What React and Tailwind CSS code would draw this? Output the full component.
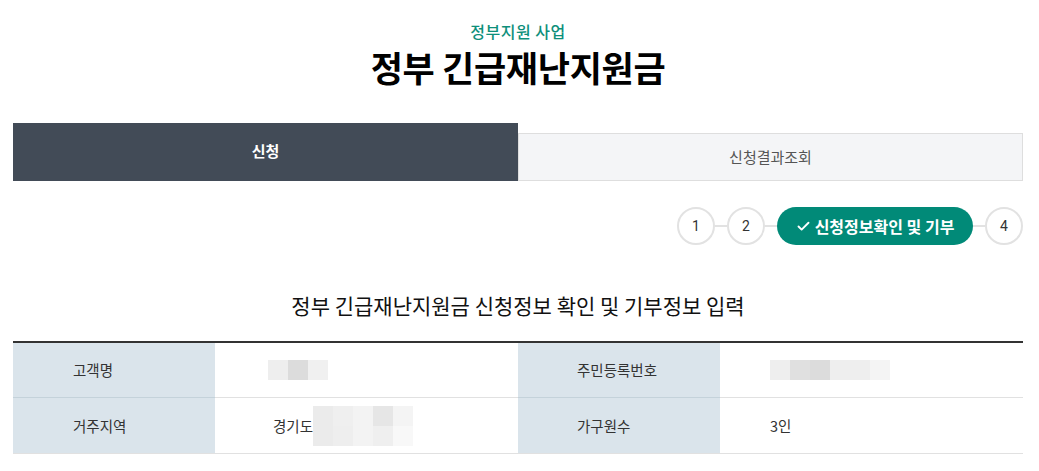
import { Check } from 'lucide-react';

const font = { fontFamily: '"Noto Sans CJK KR", "Noto Sans", sans-serif' };

function Mosaic({ rows }) {
  return (
    <div className="flex flex-col">
      {rows.map((row, i) => (
        <div key={i} className="flex">
          {row.map((c, j) => (
            <div key={j} className="w-[20px] h-[20px]" style={{ backgroundColor: c }} />
          ))}
        </div>
      ))}
    </div>
  );
}

function Circle({ n }) {
  return (
    <div
      className="w-[38px] h-[38px] rounded-full border-2 border-[#e2e2e2] flex items-center justify-center text-[14px] text-[#333]"
      style={{ fontFamily: 'Roboto, sans-serif' }}
    >
      {n}
    </div>
  );
}

const Line = () => <div className="w-[12px] h-[2px] bg-[#e2e2e2]" />;

export default function App() {
  return (
    <div className="w-[1039px] h-[471px] bg-white overflow-hidden" style={font}>
      <div className="pl-[13px] w-[1023px]">
        {/* 헤더 */}
        <div className="pt-[20px] text-center">
          <p className="text-[16px] leading-[22px] text-[#0e8f7b] font-medium tracking-[0.5px]">정부지원 사업</p>
          <h1 className="mt-[4px] text-[35px] leading-[42px] font-bold text-black tracking-[-0.3px]">
            정부 긴급재난지원금
          </h1>
        </div>

        {/* 탭 */}
        <div className="mt-[35px] flex items-end">
          <div className="w-[505px] h-[58px] bg-[#424b57] flex items-center justify-center pb-[2px] text-[15px] font-bold text-white">
            신청
          </div>
          <div className="flex-1 h-[48px] bg-[#f4f5f7] border border-[#dedede] flex items-center justify-center text-[15px] text-[#555]">
            신청결과조회
          </div>
        </div>

        {/* 단계 */}
        <div className="mt-[26px] flex items-center justify-end">
          <Circle n="1" />
          <Line />
          <Circle n="2" />
          <Line />
          <div className="w-[196px] h-[38px] rounded-full bg-[#018a78] flex items-center justify-center gap-[4px] text-white text-[16px] font-bold">
            <Check size={15} strokeWidth={3} />
            신청정보확인 및 기부
          </div>
          <Line />
          <Circle n="4" />
        </div>

        {/* 섹션 타이틀 */}
        <h2 className="mt-[46px] text-center text-[21px] leading-[28px] text-[#111]">
          정부 긴급재난지원금 신청정보 확인 및 기부정보 입력
        </h2>

        {/* 테이블 */}
        <div className="mt-[22px] border-t-2 border-[#333]">
          <div className="grid grid-cols-[202px_303px_202px_303px] text-[14.5px] text-[#333]">
            <div className="h-[55px] bg-[#dae4eb] border-b border-[#c4d2da] flex items-center pl-[60px]">고객명</div>
            <div className="h-[55px] border-b border-[#e1e1e1] flex items-center pl-[53px]">
              <Mosaic rows={[['#eeeeee', '#dcdcdc', '#f0f0f0']]} />
            </div>
            <div className="h-[55px] bg-[#dae4eb] border-b border-[#c4d2da] flex items-center pl-[59px]">주민등록번호</div>
            <div className="h-[55px] border-b border-[#e1e1e1] flex items-center pl-[50px]">
              <Mosaic rows={[['#eeeeee', '#e0e0e0', '#dcdcdc', '#eeeeee', '#eeeeee', '#f4f4f4']]} />
            </div>

            <div className="h-[56px] bg-[#dae4eb] border-b border-[#e1e1e1] flex items-center pl-[60px]">거주지역</div>
            <div className="h-[56px] border-b border-[#e1e1e1] flex items-center pl-[58px]">
              <span>경기도</span>
              <Mosaic
                rows={[
                  ['#ebebeb', '#efefef', '#f3f3f3', '#e6e6e6', '#f4f4f4'],
                  ['#ebebeb', '#eeeeee', '#f3f3f3', '#efefef', '#f8f8f8'],
                ]}
              />
            </div>
            <div className="h-[56px] bg-[#dae4eb] border-b border-[#e1e1e1] flex items-center pl-[59px]">가구원수</div>
            <div className="h-[56px] border-b border-[#e1e1e1] flex items-center pl-[50px]">3인</div>
          </div>
        </div>
      </div>
    </div>
  );
}
